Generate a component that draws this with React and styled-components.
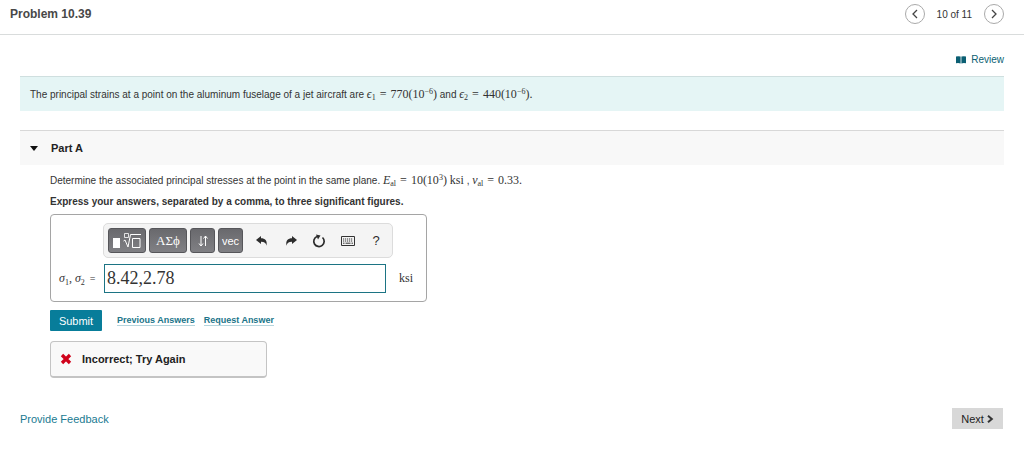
import React, { useState } from "react";
import styled, { createGlobalStyle } from "styled-components";

const App = () => {
  const [open, setOpen] = useState(true);
  const [answer, setAnswer] = useState("8.42,2.78");

  return (
    <>
      <GlobalStyle />
      <Header>
        <Title>Problem 10.39</Title>
        <Pager>
          <RoundButton aria-label="Previous item">
            <svg width="8" height="10" viewBox="0 0 8 10">
              <path d="M6 1 2 5l4 4" fill="none" stroke="#444" strokeWidth="1.3" />
            </svg>
          </RoundButton>
          <span>10 of 11</span>
          <RoundButton aria-label="Next item">
            <svg width="8" height="10" viewBox="0 0 8 10">
              <path d="m2 1 4 4-4 4" fill="none" stroke="#444" strokeWidth="1.3" />
            </svg>
          </RoundButton>
        </Pager>
      </Header>

      <Main>
        <ReviewRow>
          <ReviewLink href="#review">
            <svg width="10" height="8" viewBox="0 0 10 8" fill="#0b5f73">
              <path d="M0 .5Q2.5-.2 4.6.6v6.8Q2.5 6.5 0 7.2zM5.4.6Q7.5-.2 10 .5v6.7q-2.5-.7-4.6.2z" />
            </svg>
            Review
          </ReviewLink>
        </ReviewRow>

        <Statement>
          The principal strains at a point on the aluminum fuselage of a jet aircraft are{" "}
          <Formula>
            <i>ϵ</i><sub>1</sub> <Op>=</Op> 770(10<sup>−6</sup>)
          </Formula>{" "}
          and{" "}
          <Formula>
            <i>ϵ</i><sub>2</sub> <Op>=</Op> 440(10<sup>−6</sup>).
          </Formula>
        </Statement>

        <PartHeader>
          <PartToggle aria-expanded={open} onClick={() => setOpen(!open)}>
            <svg width="8" height="5" viewBox="0 0 8 5">
              <path d="M0 0h8L4 5z" fill="#111" />
            </svg>
            Part A
          </PartToggle>
        </PartHeader>

        {open && (
          <PartBody>
            <Question>
              Determine the associated principal stresses at the point in the same plane.{" "}
              <Formula>
                <i>E</i><sub>al</sub> <Op>=</Op> 10(10<sup>3</sup>) ksi
              </Formula>{" "}
              ,{" "}
              <Formula>
                <i>ν</i><sub>al</sub> <Op>=</Op> 0.33.
              </Formula>
            </Question>
            <Instruction>
              Express your answers, separated by a comma, to three significant figures.
            </Instruction>

            <AnswerBox>
              <Toolbar>
                <DarkButton $w={38} aria-label="Templates">
                  <svg width="30" height="18" viewBox="0 0 30 18" fill="none" stroke="#fff">
                    <path d="M1 6h7v10H1z" fill="#fff" stroke="none" />
                    <path d="M12.5 1.500h4v4h-4z" strokeWidth=".8" />
                    <path d="m11.500 9 1.500-1 3 7 2.500-12.500h10.500" strokeWidth="1" />
                    <path d="M20.500 6.500h7.500v9h-7.500z" strokeWidth="1" />
                  </svg>
                </DarkButton>
                <DarkButton $w={38} $serif>ΑΣϕ</DarkButton>
                <DarkButton $w={25} aria-label="Arrows">
                  <svg width="10" height="12" viewBox="0 0 10 12" fill="none" stroke="#fff">
                    <path d="M3 1v10M1 8.500l2 2.500 2-2.500M7.500 11V1M5.500 3.500l2-2.500 2 2.500" />
                  </svg>
                </DarkButton>
                <DarkButton $w={25}>vec</DarkButton>
                <PlainTools>
                  <IconButton aria-label="Undo">
                    <svg width="12" height="10" viewBox="0 0 12 10" fill="#2c2c2c">
                      <path d="M0 4 5 0v2.300c4 0 6.500 2 5.500 7.400C10 7 8.500 5.800 5 5.800V8z" />
                    </svg>
                  </IconButton>
                  <IconButton aria-label="Redo">
                    <svg width="12" height="10" viewBox="0 0 12 10" fill="#2c2c2c">
                      <path d="M12 4 7 0v2.300C3 2.300.5 4.300 1.500 9.700 2 7 3.500 5.800 7 5.800V8z" />
                    </svg>
                  </IconButton>
                  <IconButton aria-label="Reset">
                    <svg width="14" height="14" viewBox="0 0 14 14">
                      <path d="M10.500 3.500A5.200 5.200 0 1 1 5 2.500" fill="none" stroke="#2c2c2c" strokeWidth="1.700" />
                      <path d="M4 .5 8.500 1.500 6 5.500z" fill="#2c2c2c" />
                    </svg>
                  </IconButton>
                  <IconButton aria-label="Keyboard shortcuts">
                    <svg width="14" height="10" viewBox="0 0 14 10" fill="none" stroke="#333">
                      <path d="M.5.5h13v9H.5z" />
                      <path d="M2 3h10M2 5h10" strokeDasharray="1.200 .8" />
                      <path d="M2 7.200h1.500M4.500 7.200h5M10.500 7.200H12" />
                    </svg>
                  </IconButton>
                  <IconButton aria-label="Help">?</IconButton>
                </PlainTools>
              </Toolbar>
              <AnswerRow>
                <AnswerLabel htmlFor="answer">
                  <i>σ</i><sub>1</sub>, <i>σ</i><sub>2</sub> <small>=</small>
                </AnswerLabel>
                <AnswerInput
                  id="answer"
                  value={answer}
                  onChange={(e) => setAnswer(e.target.value)}
                />
                <Unit>ksi</Unit>
              </AnswerRow>
            </AnswerBox>

            <Actions>
              <SubmitButton>Submit</SubmitButton>
              <ActionLink href="#previous">Previous Answers</ActionLink>
              <ActionLink href="#request">Request Answer</ActionLink>
            </Actions>

            <Result role="status">
              <svg width="12" height="12" viewBox="0 0 12 12">
                <path d="m2 2 8 8M10 2l-8 8" stroke="#d0021b" strokeWidth="3.300" />
              </svg>
              Incorrect; Try Again
            </Result>
          </PartBody>
        )}

        <Footer>
          <FeedbackLink href="#feedback">Provide Feedback</FeedbackLink>
          <NextButton>
            Next
            <svg width="7" height="8" viewBox="0 0 7 8">
              <path d="m1 .8 3.800 3.200L1 7.200" fill="none" stroke="#333" strokeWidth="2" />
            </svg>
          </NextButton>
        </Footer>
      </Main>
    </>
  );
};

export default App;

const GlobalStyle = createGlobalStyle`
  * {
    box-sizing: border-box;
  }
  body {
    margin: 0;
    background: #fff;
    color: #333;
    font-family: "Liberation Sans", Arial, sans-serif;
    font-size: 10px;
  }
  button, input {
    margin: 0;
    padding: 0;
    font-family: inherit;
  }
  svg {
    display: block;
    flex: none;
  }
`;

const Header = styled.header`
  display: flex;
  align-items: center;
  justify-content: space-between;
  height: 35px;
  padding: 0 20px 6px 10px;
  border-bottom: 1px solid #d9dcdc;
`;

const Title = styled.h1`
  margin: 0;
  font-size: 12px;
  color: #484848;
`;

const Pager = styled.nav`
  display: flex;
  align-items: center;
  gap: 12px;
  font-size: 10px;
`;

const RoundButton = styled.button`
  display: flex;
  align-items: center;
  justify-content: center;
  width: 20px;
  height: 20px;
  border: 1px solid #aaa;
  border-radius: 50%;
  background: #fff;
`;

const Main = styled.main`
  padding: 0 20px;
`;

const ReviewRow = styled.div`
  display: flex;
  justify-content: flex-end;
  padding: 18px 0 10px;
`;

const ReviewLink = styled.a`
  display: flex;
  align-items: center;
  gap: 5px;
  line-height: 13px;
  color: #0b5f73;
  text-decoration: none;
`;

const Statement = styled.p`
  margin: 0;
  padding: 11px 10px 9px;
  border-top: 1px solid #cfdfdf;
  background: #e5f5f5;
  line-height: 14px;
`;

const Formula = styled.span`
  font-family: "Liberation Serif", "Times New Roman", serif;
  font-size: 12px;
  line-height: 1;
  white-space: nowrap;
  sub, sup {
    font-size: 8px;
    line-height: 0;
  }
  sub {
    vertical-align: -2px;
  }
  sup {
    vertical-align: 4px;
  }
`;

const Op = styled.span`
  margin: 0 1px;
`;

const PartHeader = styled.h2`
  margin: 19px 0 0;
  border-top: 1px solid #d8d8d8;
  background: #f8f8f8;
`;

const PartToggle = styled.button`
  display: flex;
  align-items: center;
  gap: 13px;
  width: 100%;
  height: 34px;
  padding-left: 10px;
  border: 0;
  background: transparent;
  font-size: 11px;
  font-weight: bold;
  color: #222;
`;

const PartBody = styled.section`
  padding: 9px 30px 0;
`;

const Question = styled.p`
  margin: 0;
  line-height: 14px;
`;

const Instruction = styled.p`
  margin: 7px 0 5px;
  font-weight: bold;
  line-height: 14px;
`;

const AnswerBox = styled.div`
  width: 377px;
  max-width: 100%;
  padding: 8px;
  border: 1px solid #a5a5a5;
  border-radius: 4px;
`;

const Toolbar = styled.div`
  display: flex;
  align-items: center;
  gap: 3px;
  width: 290px;
  height: 35px;
  margin: 0 0 6px 44px;
  padding: 0 4px;
  border: 1px solid #dcdcdc;
  border-radius: 5px;
  background: #f4f4f4;
`;

const DarkButton = styled.button`
  display: flex;
  align-items: center;
  justify-content: center;
  width: ${(props) => props.$w}px;
  height: 25px;
  border: 1px solid #56565a;
  border-radius: 3px;
  background: linear-gradient(#69696d, #808084);
  color: #fff;
  font-family: ${(props) => (props.$serif ? '"Liberation Serif", serif' : "inherit")};
  font-size: ${(props) => (props.$serif ? 13 : 11)}px;
`;

const PlainTools = styled.div`
  display: flex;
  flex: 1;
  justify-content: space-between;
  padding: 0 4px 0 8px;
`;

const IconButton = styled.button`
  display: flex;
  align-items: center;
  justify-content: center;
  width: 16px;
  height: 20px;
  border: 0;
  background: transparent;
  font-size: 13px;
  color: #2c2c2c;
`;

const AnswerRow = styled.div`
  display: flex;
  align-items: center;
`;

const AnswerLabel = styled.label`
  width: 45px;
  font-family: "Liberation Serif", serif;
  font-size: 12px;
  white-space: nowrap;
  sub {
    font-size: 8px;
    line-height: 0;
  }
  small {
    margin-left: 2px;
    font-size: 10px;
  }
`;

const AnswerInput = styled.input`
  width: 282px;
  height: 29px;
  padding: 0 2px;
  border: 1px solid #1c7484;
  background: #fff;
  font-family: "Liberation Serif", serif;
  font-size: 18px;
  color: #333;
`;

const Unit = styled.span`
  margin-left: 13px;
  font-family: "Liberation Serif", serif;
  font-size: 12px;
`;

const Actions = styled.div`
  display: flex;
  align-items: center;
  margin: 8px 0 10px;
`;

const SubmitButton = styled.button`
  width: 52px;
  height: 21px;
  margin-right: 6px;
  border: 0;
  border-radius: 1px;
  background: #087d9a;
  color: #fff;
  font-size: 11px;
`;

const ActionLink = styled.a`
  margin-left: 9px;
  border-bottom: 1px solid #b5d5dd;
  color: #207489;
  font-size: 9px;
  font-weight: bold;
  line-height: 10px;
  text-decoration: none;
`;

const Result = styled.div`
  display: flex;
  align-items: center;
  gap: 10px;
  width: 217px;
  height: 37px;
  padding-left: 9px;
  border: 1px solid #c4c4c4;
  border-bottom-width: 2px;
  border-radius: 4px;
  background: #f9f9f9;
  color: #222;
  font-size: 11px;
  font-weight: bold;
`;

const Footer = styled.footer`
  display: flex;
  align-items: center;
  justify-content: space-between;
  padding: 30px 1px 20px 0;
`;

const FeedbackLink = styled.a`
  color: #207a91;
  font-size: 11px;
  text-decoration: none;
`;

const NextButton = styled.button`
  display: flex;
  align-items: center;
  justify-content: center;
  gap: 3px;
  width: 51px;
  height: 21px;
  border: 0;
  background: #d8d8d8;
  color: #222;
  font-size: 11px;
`;
